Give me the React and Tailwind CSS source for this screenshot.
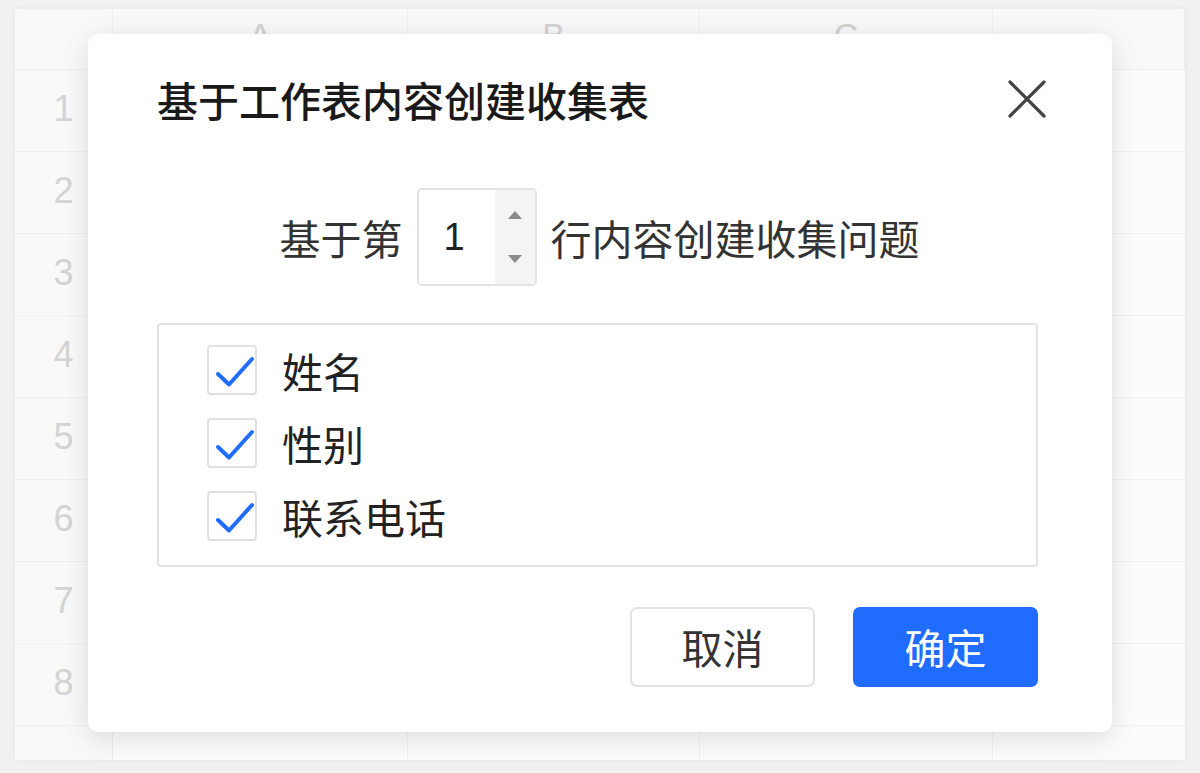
import React from "react";

const FONT = { fontFamily: '"Noto Sans CJK SC", "Noto Sans", sans-serif' };
const NUM_FONT = { fontFamily: '"Liberation Sans", Arial, sans-serif' };

const columns = ["A", "B", "C", ""];
const rows = [1, 2, 3, 4, 5, 6, 7, 8, ""];
const fields = ["姓名", "性别", "联系电话"];

const SheetBackground = () => (
  <div className="h-full w-full bg-[#f1f1f1] pl-[15px] pr-[15px] pt-[9px] pb-[13px]">
    <div className="h-full w-full overflow-hidden bg-[#fcfcfc] shadow-[0_0_6px_rgba(0,0,0,0.05)]" style={NUM_FONT}>
      <div className="flex h-[61px] border-b border-[#eeeeee] bg-[#f9f9f9]">
        <div className="w-[98px] shrink-0 border-r border-[#eeeeee]" />
        {columns.map((c, i) => (
          <div
            key={i}
            className={`flex items-start justify-center pt-[6px] text-[34px] leading-[40px] text-[#d2d2d2] border-r border-[#eeeeee] ${
              i === 3 ? "flex-1" : i === 0 ? "w-[295px]" : i === 1 ? "w-[292px]" : "w-[293px]"
            }`}
          >
            {c}
          </div>
        ))}
      </div>
      {rows.map((r, i) => (
        <div key={i} className="flex h-[82px] border-b border-[#f0f0f0]">
          <div className="flex w-[98px] shrink-0 items-center justify-center border-r border-[#eeeeee] bg-[#f9f9f9] pb-[4px] text-[36px] text-[#d4d4d4]">
            {r}
          </div>
          <div className="w-[295px] border-r border-[#f0f0f0]" />
          <div className="w-[292px] border-r border-[#f0f0f0]" />
          <div className="w-[293px] border-r border-[#f0f0f0]" />
          <div className="flex-1" />
        </div>
      ))}
    </div>
  </div>
);

const CheckIcon = () => (
  <svg viewBox="0 0 50 50" className="h-[50px] w-[50px]">
    <path d="M9 27 L20 37.5 L43 12" fill="none" stroke="#1f6cff" strokeWidth="4" strokeLinecap="round" strokeLinejoin="round" />
  </svg>
);

const CreateFormDialog = () => (
  <div
    className="absolute left-[88px] top-[34px] flex h-[698px] w-[1024px] flex-col rounded-[10px] bg-white pl-[69px] pr-[74px] pt-[45px] shadow-[0_6px_28px_rgba(0,0,0,0.13)]"
    style={FONT}
  >
    <div className="flex items-center justify-between">
      <h3 className="text-[41px] font-medium leading-[40px] text-[#1a1a1a]">基于工作表内容创建收集表</h3>
      <button className="mr-[-9px] flex h-[40px] w-[40px] items-center justify-center">
        <svg viewBox="0 0 40 40" className="h-[40px] w-[40px]">
          <path d="M3 3 L37 37 M37 3 L3 37" stroke="#444" strokeWidth="3.2" strokeLinecap="round" />
        </svg>
      </button>
    </div>

    <div className="mt-[69px] flex items-center justify-center gap-[14px] pl-[4px] text-[41px] leading-[40px] text-[#333]">
      <span>基于第</span>
      <div className="flex h-[98px] w-[120px] overflow-hidden rounded-[5px] border-2 border-[#e3e3e3]">
        <div className="flex flex-1 items-center pl-[25px] text-[38px] text-[#222]" style={NUM_FONT}>
          1
        </div>
        <div className="flex w-[40px] flex-col items-center justify-between bg-[#f4f4f4] py-[20px]">
          <svg viewBox="0 0 16 10" className="h-[10px] w-[16px]">
            <path d="M8 1 L15 9 L1 9 Z" fill="#8a8a8a" />
          </svg>
          <svg viewBox="0 0 16 10" className="h-[10px] w-[16px]">
            <path d="M1 1 L15 1 L8 9 Z" fill="#8a8a8a" />
          </svg>
        </div>
      </div>
      <span>行内容创建收集问题</span>
    </div>

    <div className="mt-[37px] flex h-[244px] flex-col gap-[23px] rounded-[4px] border-2 border-[#e3e3e3] pl-[48px] pt-[20px]">
      {fields.map((f) => (
        <div key={f} className="flex items-center gap-[25px]">
          <div className="h-[50px] w-[50px] rounded-[4px] border-2 border-[#e0e0e0] bg-white">
            <CheckIcon />
          </div>
          <span className="text-[41px] leading-[40px] text-[#222]">{f}</span>
        </div>
      ))}
    </div>

    <div className="mt-[40px] flex justify-end gap-[38px]">
      <button className="h-[80px] w-[185px] rounded-[7px] border-2 border-[#e3e3e3] bg-white text-[41px] text-[#333]">
        取消
      </button>
      <button className="h-[80px] w-[185px] rounded-[7px] bg-[#1f6cff] text-[41px] text-white">
        确定
      </button>
    </div>
  </div>
);

export default function App() {
  return (
    <div className="relative h-[773px] w-[1200px] overflow-hidden">
      <SheetBackground />
      <CreateFormDialog />
    </div>
  );
}
